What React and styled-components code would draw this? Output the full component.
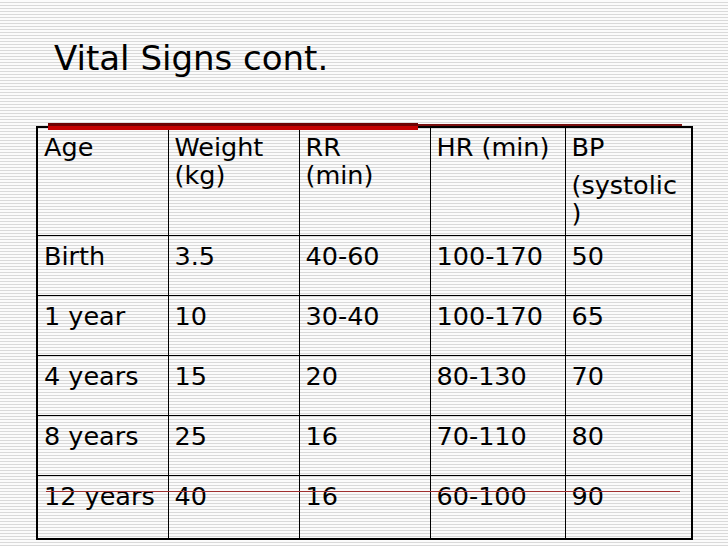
import { styled, createGlobalStyle } from "styled-components";

const GlobalStyle = createGlobalStyle`
  html, body {
    margin: 0;
    padding: 0;
  }
  body {
    width: 728px;
    height: 546px;
    overflow: hidden;
    font-family: "DejaVu Sans", Verdana, sans-serif;
    color: #000;
    background: repeating-linear-gradient(
      to bottom,
      #fbfbfb 0px,
      #fbfbfb 2px,
      #d9d9d9 2px,
      #d9d9d9 3px
    );
  }
`;

const Slide = styled.div`
  position: relative;
  width: 728px;
  height: 546px;
  padding-top: 38px;
  box-sizing: border-box;
`;

const Title = styled.h1`
  margin: 0 0 0 54px;
  font-size: 34px;
  line-height: 41px;
  font-weight: normal;
`;

const TableWrap = styled.div`
  position: relative;
  margin: 47px 0 0 36px;
  width: 655px;
`;

const Table = styled.table`
  width: 655px;
  table-layout: fixed;
  border-collapse: collapse;
  border: 2px solid #000;
  font-size: 25.5px;
  line-height: 28px;
`;

const Row = styled.tr`
  height: ${({ h }) => h}px;
`;

const Cell = styled.td`
  border: 1px solid #000;
  padding: 6px 0 0 6px;
  vertical-align: top;
  white-space: nowrap;
  overflow: visible;
`;

const Head = styled(Cell)`
  padding-top: 5px;
`;

const SubLine = styled.div`
  margin-top: 10px;
`;

const RedBar = styled.div`
  position: absolute;
  left: 12px;
  top: -3px;
  width: 370px;
  height: 7px;
  background: linear-gradient(to bottom, #6e0000 0, #6e0000 3px, #c40000 3px);
`;

const ThinTopLine = styled.div`
  position: absolute;
  left: 382px;
  top: -2px;
  width: 264px;
  height: 2px;
  background: #7a1010;
`;

const BottomLine = styled.div`
  position: absolute;
  left: 10px;
  bottom: 48px;
  width: 634px;
  height: 1px;
  background: #a03030;
`;

const rows = [
  ["Birth", "3.5", "40-60", "100-170", "50"],
  ["1 year", "10", "30-40", "100-170", "65"],
  ["4 years", "15", "20", "80-130", "70"],
  ["8 years", "25", "16", "70-110", "80"],
  ["12 years", "40", "16", "60-100", "90"],
];

const widths = [131, 131, 131, 135, 127];

export default function App() {
  return (
    <>
      <GlobalStyle />
      <Slide>
        <Title>Vital Signs cont.</Title>
        <TableWrap>
          <Table>
            <colgroup>
              {widths.map((w, i) => (
                <col key={i} style={{ width: w }} />
              ))}
            </colgroup>
            <tbody>
              <Row h={108}>
                <Head>Age</Head>
                <Head>
                  Weight
                  <br />
                  (kg)
                </Head>
                <Head>
                  RR
                  <br />
                  (min)
                </Head>
                <Head>HR (min)</Head>
                <Head>
                  BP
                  <SubLine>
                    (systolic
                    <br />)
                  </SubLine>
                </Head>
              </Row>
              {rows.map((r, i) => (
                <Row key={i} h={i === rows.length - 1 ? 64 : 60}>
                  {r.map((c, j) => (
                    <Cell key={j}>{c}</Cell>
                  ))}
                </Row>
              ))}
            </tbody>
          </Table>
          <RedBar />
          <ThinTopLine />
          <BottomLine />
        </TableWrap>
      </Slide>
    </>
  );
}
